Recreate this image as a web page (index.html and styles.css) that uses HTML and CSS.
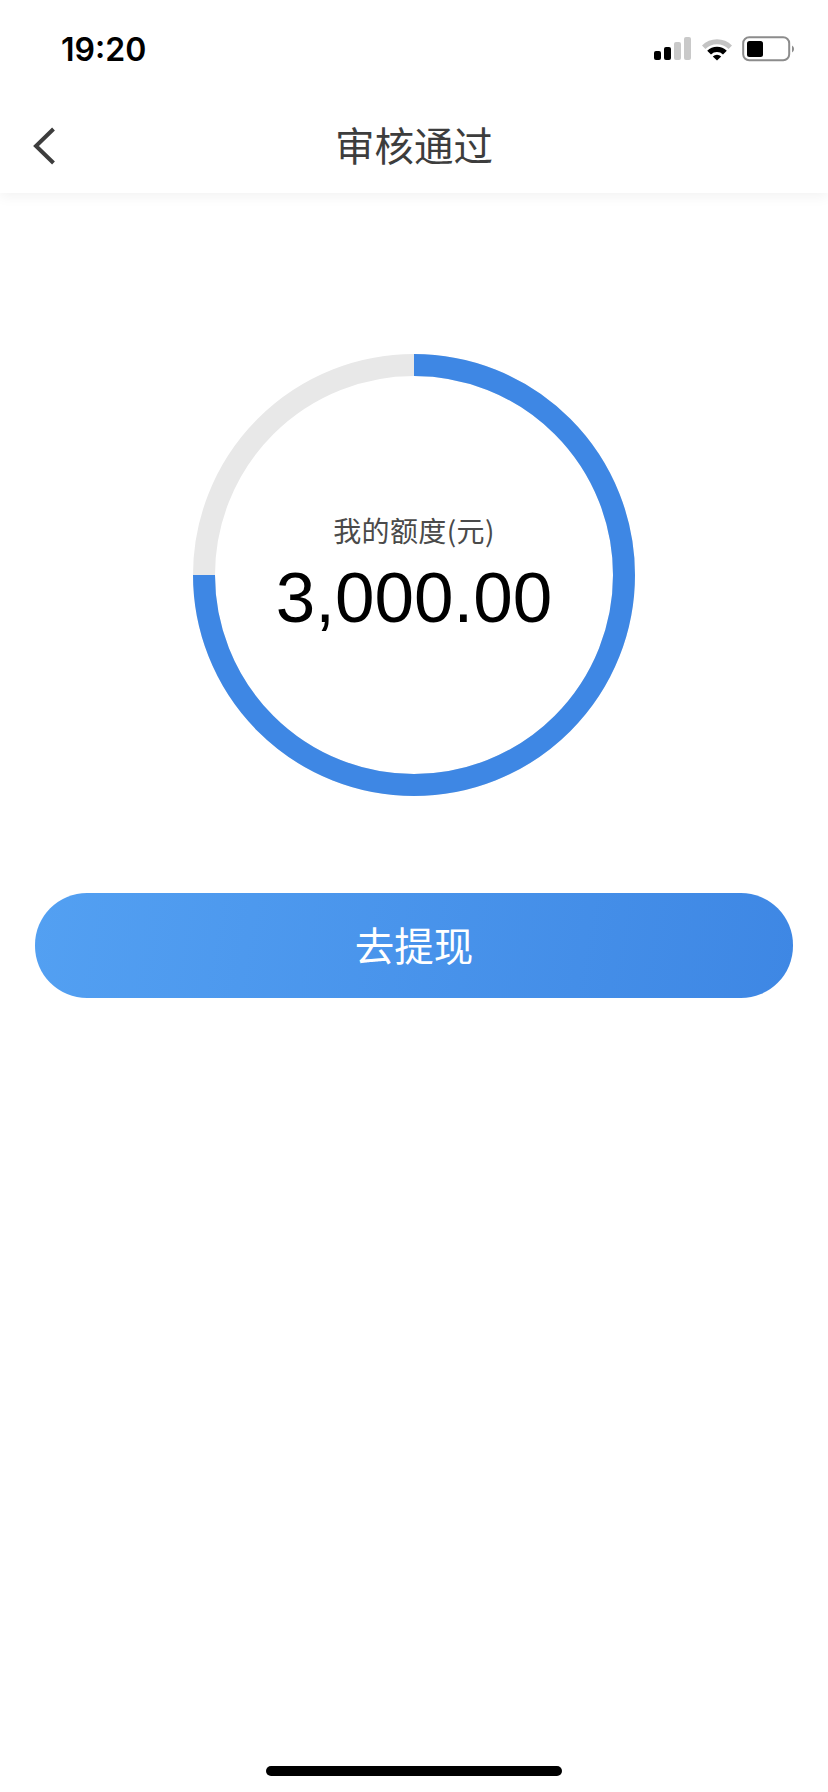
FILE: index.html
```html
<!DOCTYPE html>
<html lang="zh-CN">
<head>
    <meta charset="UTF-8">
    <title>审核通过</title>
    <link rel="stylesheet" href="styles.css">
</head>
<body>

<div class="page">
    <div class="status-bar">
        <span class="time">19:20</span>
        <div class="status-icons">
            <svg class="signal" width="38" height="24" viewBox="0 0 38 24">
                <rect x="0" y="14" width="7" height="9" rx="2" fill="#000"/>
                <rect x="10" y="10" width="7" height="13" rx="2" fill="#000"/>
                <rect x="20" y="5" width="7" height="18" rx="2" fill="#c9c9c9"/>
                <rect x="30" y="0" width="7" height="23" rx="2" fill="#c9c9c9"/>
            </svg>
            <svg class="wifi" width="32" height="24" viewBox="0 0 32 24">
                <path d="M1 8.5 A21 21 0 0 1 31 8.5 L27.6 12 A16.5 16.5 0 0 0 4.4 12 Z" fill="#c4c4c4"/>
                <path d="M6.2 13.8 A13.8 13.8 0 0 1 25.8 13.8 L22 17.6 A8.5 8.5 0 0 0 10 17.6 Z" fill="#000"/>
                <path d="M11.8 19.4 A6 6 0 0 1 20.2 19.4 L16 23.6 Z" fill="#000"/>
            </svg>
            <svg class="battery" width="53" height="26" viewBox="0 0 53 26">
                <rect x="1.2" y="1.2" width="46" height="23" rx="6" fill="none" stroke="#8c8c8c" stroke-width="2"/>
                <rect x="5" y="5" width="16" height="16" rx="2.5" fill="#000"/>
                <path d="M50 9.5 A4 4 0 0 1 50 16.5 Z" fill="#8c8c8c"/>
            </svg>
        </div>
    </div>

    <header class="nav-bar">
        <svg class="back" width="24" height="38" viewBox="0 0 24 38">
            <path d="M21.5 2 L4 19 L21.5 36" fill="none" stroke="#3d3d3d" stroke-width="4"/>
        </svg>
        <h1 class="nav-title">审核通过</h1>
    </header>

    <main class="content">
        <div class="quota-ring">
            <svg class="ring-chart" width="442" height="442" viewBox="0 0 442 442">
                <circle cx="221" cy="221" r="210" fill="none" stroke="#e8e8e8" stroke-width="22"/>
                <path d="M221 11 A210 210 0 1 1 11 221" fill="none" stroke="#3e87e4" stroke-width="22"/>
            </svg>
            <div class="quota-text">
                <div class="quota-label">我的额度(元)</div>
                <div class="quota-amount">3,000.00</div>
            </div>
        </div>

        <button class="withdraw-btn">去提现</button>
    </main>

    <div class="home-indicator"></div>
</div>

</body>
</html>
```

FILE: styles.css
```css
html, body
{
    margin: 0;
    padding: 0;
    background: #fff;
}

body
{
    font-family: "Liberation Sans", "Noto Sans CJK SC", sans-serif;
}

.page
{
    display: flex;
    flex-direction: column;
    width: 828px;
    height: 1792px;
    overflow: hidden;
}

.status-bar
{
    display: flex;
    flex: none;
    position: relative;
    z-index: 1;
    align-items: center;
    justify-content: space-between;
    height: 98px;
    padding: 0 33px 0 61px;
    box-sizing: border-box;
    background: #fff;
}

.time
{
    font-family: Inter, "Liberation Sans", sans-serif;
    font-size: 32px;
    font-weight: 600;
    color: #000;
}

.status-icons
{
    display: flex;
    align-items: center;
    gap: 9px;
}

.nav-bar
{
    display: flex;
    flex: none;
    position: relative;
    align-items: center;
    justify-content: center;
    height: 95px;
    padding-bottom: 5px;
    box-sizing: border-box;
    background: #fff;
    box-shadow: 0 4px 12px rgba(0, 0, 0, 0.05);
}

.back
{
    position: absolute;
    left: 32px;
    top: 29px;
}

.nav-title
{
    margin: 0;
    font-family: "Noto Sans CJK SC", sans-serif;
    font-size: 39.5px;
    font-weight: 400;
    color: #3d3d3d;
}

.content
{
    display: flex;
    flex: 1;
    flex-direction: column;
    align-items: center;
    padding: 161px 35px 0;
}

.quota-ring
{
    display: grid;
    width: 442px;
    height: 442px;
}

.ring-chart, .quota-text
{
    grid-area: 1 / 1;
}

.quota-text
{
    display: flex;
    flex-direction: column;
    align-items: center;
    padding-top: 156px;
}

.quota-label
{
    font-family: "Noto Sans CJK SC", sans-serif;
    font-size: 28px;
    line-height: 40px;
    letter-spacing: 0.4px;
    color: #4a4a4a;
}

.quota-amount
{
    margin-top: 8px;
    font-size: 71px;
    line-height: 80px;
    color: #000;
}

.withdraw-btn
{
    width: 100%;
    height: 105px;
    margin-top: 97px;
    padding-bottom: 6px;
    border: none;
    border-radius: 52px;
    background: linear-gradient(100deg, #53a0f2, #3e87e4);
    font-family: "Noto Sans CJK SC", sans-serif;
    font-size: 39.5px;
    color: #fff;
}

.home-indicator
{
    flex: none;
    width: 296px;
    height: 10px;
    margin: 0 auto 16px;
    border-radius: 5px;
    background: #000;
}
```
